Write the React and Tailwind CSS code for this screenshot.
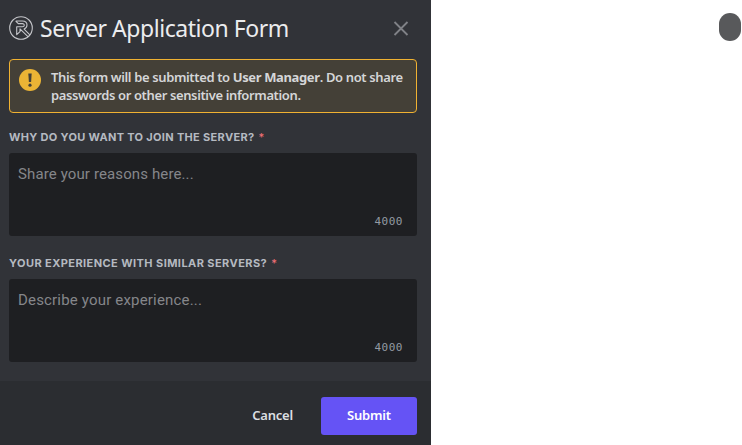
function ServerLogo() {
  return (
    <svg className="size-6 shrink-0" viewBox="0 0 24 24" fill="none" stroke="#c5c6ca" strokeWidth="1.1" strokeLinejoin="round">
      <circle cx="12" cy="12" r="11.3" />
      <path d="M6.700 5h6.800c2.900 0 4.500 1.600 4.500 4.100 0 2-1.100 3.400-2.900 4l6 6M19.200 20.900 11 12.900v2.800l-3.300 2.900v-7.800h5.600c1.300 0 2-.7 2-1.600s-.7-1.600-2-1.600H9.300L6.700 5" />
    </svg>
  );
}

function Field({ label, labelClass, placeholder, placeholderClass, className }) {
  return (
    <div className={className}>
      <label className={"flex h-4 whitespace-nowrap font-['Inter',sans-serif] text-[11px] leading-4 font-bold text-[#b5bac1] uppercase " + labelClass}>
        {label}
        <span className="ml-1 font-medium tracking-normal text-[#f27076]">*</span>
      </label>
      <div className="mt-2 flex h-[83px] flex-col justify-between rounded-[3px] bg-[#1e1f22] pt-[10px] pr-[14px] pb-[7px] pl-[9px]">
        <span className={"whitespace-nowrap text-[15px] leading-[22px] text-[#85868a] " + placeholderClass}>{placeholder}</span>
        <span className="self-end font-['DejaVu_Sans_Mono',monospace] text-[11px] leading-[14px] tracking-[0.5px] text-[#949ba4]">4000</span>
      </div>
    </div>
  );
}

export default function App() {
  return (
    <div className="flex h-[445px] w-[742px] items-start justify-between overflow-hidden bg-white font-['Roboto',sans-serif]">
      <main className="flex h-full w-[431px] flex-col bg-[#313338]">
        <header className="flex h-[59px] items-center gap-[7px] pr-[22px] pb-[3px] pl-[9px]">
          <ServerLogo />
          <h1 className="flex-1 whitespace-nowrap font-['Noto_Sans',sans-serif] text-[23px] leading-8 tracking-[-0.45px] text-[#ebecee]">Server Application Form</h1>
          <svg className="size-4" viewBox="0 0 16 16" stroke="#808287" strokeWidth="1.8">
            <path d="m1.500 2 13 13m0-13-13 13" />
          </svg>
        </header>
        <section className="mr-[14px] ml-[9px] flex h-[54px] gap-[10px] rounded-[4px] border border-[#f0b232] bg-[#444037] pt-[9px] pl-[9px]">
          <svg className="size-[22px] shrink-0" viewBox="0 0 22 22">
            <circle cx="11" cy="11" r="11" fill="#ebb435" />
            <path d="M9.300 4.500h3.400l-.6 8.500H9.900Z" fill="#444037" />
            <circle cx="11" cy="16.200" r="1.600" fill="#444037" />
          </svg>
          <p className="-mt-px whitespace-nowrap font-['Noto_Sans',sans-serif] text-[13px] leading-[18px] font-semibold tracking-[-0.37px] text-[#d5d6d7]">
            <span className="block">This form will be submitted to <b className="font-bold">User Manager</b>. Do not share</span>
            <span className="block">passwords or other sensitive information.</span>
          </p>
        </section>
        <Field className="mt-4 mr-[14px] ml-[9px]" label="Why do you want to join the server?" labelClass="tracking-[0.32px]" placeholder="Share your reasons here..." placeholderClass="tracking-[0.12px]" />
        <Field className="mt-[19px] mr-[14px] ml-[9px]" label="Your experience with similar servers?" labelClass="tracking-[0.43px]" placeholder="Describe your experience..." placeholderClass="tracking-[0.18px]" />
        <footer className="mt-auto flex h-16 items-start justify-end bg-[#2b2d31] pt-4 pr-[14px] font-['Noto_Sans',sans-serif] text-[13px] font-semibold">
          <button className="h-[38px] px-7 tracking-[-0.2px] text-[#dbdee1]">Cancel</button>
          <button className="h-[38px] w-24 rounded-[3px] bg-[#6553f5] pb-px tracking-[-0.2px] text-white">Submit</button>
        </footer>
      </main>
      <div className="mt-[13px] mr-px h-7 w-[22px] rounded-full bg-[#58595b]" />
    </div>
  );
}
